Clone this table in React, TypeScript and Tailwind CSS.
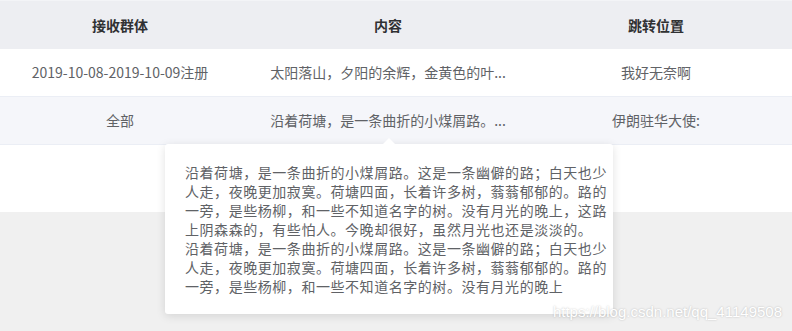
import React from 'react'

const rows = [
  { group: '2019-10-08-2019-10-09注册', content: '太阳落山，夕阳的余辉，金黄色的叶...', target: '我好无奈啊' },
  { group: '全部', content: '沿着荷塘，是一条曲折的小煤屑路。...', target: '伊朗驻华大使:' },
]

// tooltip text, broken where the reference breaks it
const tipLines = [
  '沿着荷塘，是一条曲折的小煤屑路。这是一条幽僻的路；白天也少',
  '人走，夜晚更加寂寞。荷塘四面，长着许多树，蓊蓊郁郁的。路的',
  '一旁，是些杨柳，和一些不知道名字的树。没有月光的晚上，这路',
  '上阴森森的，有些怕人。今晚却很好，虽然月光也还是淡淡的。',
  '沿着荷塘，是一条曲折的小煤屑路。这是一条幽僻的路；白天也少',
  '人走，夜晚更加寂寞。荷塘四面，长着许多树，蓊蓊郁郁的。路的',
  '一旁，是些杨柳，和一些不知道名字的树。没有月光的晚上',
]

export default function App() {
  return (
    <div
      className="relative w-[792px] h-[331px] bg-[#f0f0f0] overflow-hidden"
      style={{ fontFamily: '"Noto Sans CJK SC", "Liberation Sans", sans-serif' }}
    >
      {/* table area */}
      <div className="bg-white h-[212px]">
        <div className="grid grid-cols-[240px_296px_240px_1fr] h-[49px] items-center bg-[#edeef2] border-t border-[#f3f4f7] text-[14px] font-bold text-[#303133]">
          <div className="text-center">接收群体</div>
          <div className="text-center">内容</div>
          <div className="text-center">跳转位置</div>
          <div />
        </div>
        {rows.map((r, i) => (
          <div
            key={i}
            className={`grid grid-cols-[240px_296px_240px_1fr] h-[48px] items-center border-b border-[#ebeef5] text-[14px] text-[#606266] ${
              i === 1 ? 'bg-[#f5f6fa]' : 'bg-white'
            }`}
          >
            <div className="text-center">{r.group}</div>
            <div className="text-center">{r.content}</div>
            <div className="text-center">{r.target}</div>
            <div />
          </div>
        ))}
      </div>

      {/* tooltip */}
      <div className="absolute left-[165px] top-[144px] w-[448px] bg-white rounded-[3px] shadow-[0_2px_10px_rgba(0,0,0,0.12)] px-5 pt-[19px] pb-[18px]">
        <div className="absolute -top-[6px] left-[218px] w-0 h-0 border-l-[6px] border-r-[6px] border-b-[6px] border-l-transparent border-r-transparent border-b-white" />
        <div className="text-[14px] tracking-[0.55px] leading-[19px] text-[#606266] [text-spacing-trim:space-all]">
          {tipLines.map((l, i) => (
            <div key={i} className="whitespace-nowrap">
              {l}
            </div>
          ))}
        </div>
      </div>

      {/* watermark */}
      <div
        className="absolute right-[10px] bottom-[8px] text-[15px] text-white [text-shadow:0_0_2px_rgba(0,0,0,0.25)]"
        style={{ fontFamily: '"Liberation Sans", Arial, sans-serif' }}
      >
        https://blog.csdn.net/qq_41149508
      </div>
    </div>
  )
}
